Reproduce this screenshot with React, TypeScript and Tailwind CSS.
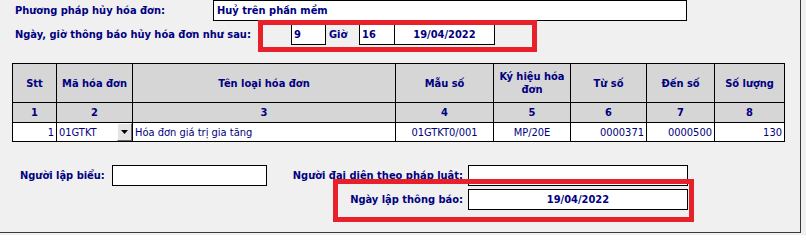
import React from "react";

const navy = "text-[#000080]";

const cols = [
  { head: "Stt", num: "1" },
  { head: "Mã hóa đơn", num: "2" },
  { head: "Tên loại hóa đơn", num: "3" },
  { head: "Mẫu số", num: "4" },
  { head: "Ký hiệu hóa đơn", num: "5" },
  { head: "Từ số", num: "6" },
  { head: "Đến số", num: "7" },
  { head: "Số lượng", num: "8" },
];

function Box({ className = "", children }: { className?: string; children?: React.ReactNode }) {
  return (
    <div className={`flex items-center border border-black bg-white ${className}`}>
      {children}
    </div>
  );
}

function DropButton() {
  return (
    <div className="flex h-full w-[15px] items-center justify-center border-t border-l border-t-white border-l-white border-r border-b border-r-[#6a6a6a] border-b-[#6a6a6a] bg-[#e4e4e4]">
      <svg width="7" height="4" viewBox="0 0 7 4">
        <polygon points="0,0 7,0 3.5,4" fill="#000" />
      </svg>
    </div>
  );
}

export default function App() {
  return (
    <div
      className="relative h-[235px] w-[806px] overflow-hidden bg-[#f0f0f0] text-[11px] leading-[13px]"
      style={{ fontFamily: '"DejaVu Sans Condensed", "DejaVu Sans", sans-serif' }}
    >
      <div className="h-[233px] w-[801px] border-r border-b border-[#3a3a3a]">
        {/* phương pháp */}
        <div className="flex h-[21px] items-center pl-[15px]">
          <div className={`w-[198px] font-bold ${navy}`}>Phương pháp hủy hóa đơn:</div>
          <Box className={`h-[21px] w-[474px] pl-[3px] font-bold ${navy}`}>Huỷ trên phần mềm</Box>
        </div>

        {/* ngày giờ */}
        <div className="mt-[3px] flex h-[21px] items-center pl-[15px]">
          <div className={`w-[276px] font-bold ${navy}`}>Ngày, giờ thông báo hủy hóa đơn như sau:</div>
          <Box className={`h-[21px] w-[35px] pl-[2px] font-bold ${navy}`}>9</Box>
          <div className={`w-[33px] pl-[3px] font-bold ${navy}`}>Giờ</div>
          <Box className={`h-[21px] w-[36px] pl-[2px] font-bold ${navy}`}>16</Box>
          <Box className={`-ml-px h-[21px] w-[101px] justify-center font-bold ${navy}`}>19/04/2022</Box>
        </div>

        {/* bảng */}
        <div className="ml-[12px] mt-[18px] grid w-[773px] grid-cols-[44px_76px_263px_98px_77px_76px_68px_70px] grid-rows-[39px_20px_19px] border-l border-t border-black">
          {cols.map((c) => (
            <div
              key={"h" + c.num}
              className={`flex items-center justify-center border-r border-b border-black bg-[#d6d6d6] px-1 text-center font-bold ${navy}`}
            >
              {c.head}
            </div>
          ))}
          {cols.map((c) => (
            <div
              key={"n" + c.num}
              className={`flex items-center justify-center border-r border-b border-black bg-[#d6d6d6] font-bold ${navy}`}
            >
              {c.num}
            </div>
          ))}
          <div className={`flex items-center justify-end border-r border-b border-black bg-white pr-[2px] ${navy}`}>1</div>
          <div className={`flex items-center border-r border-b border-black bg-white ${navy}`}>
            <span className="flex-1 pl-[2px]">01GTKT</span>
            <DropButton />
          </div>
          <div className={`flex items-center border-r border-b border-black bg-white pl-[2px] ${navy}`}>
            Hóa đơn giá trị gia tăng
          </div>
          <div className={`flex items-center justify-center border-r border-b border-black bg-white ${navy}`}>01GTKT0/001</div>
          <div className={`flex items-center justify-center border-r border-b border-black bg-white ${navy}`}>MP/20E</div>
          <div className={`flex items-center justify-end border-r border-b border-black bg-white pr-[2px] ${navy}`}>0000371</div>
          <div className={`flex items-center justify-end border-r border-b border-black bg-white pr-[2px] ${navy}`}>0000500</div>
          <div className={`flex items-center justify-end border-r border-b border-black bg-white pr-[2px] ${navy}`}>130</div>
        </div>

        {/* người lập / đại diện */}
        <div className="mt-[23px] flex h-[21px] items-center">
          <div className={`w-[112px] pl-[20px] font-bold ${navy}`}>Người lập biểu:</div>
          <Box className="h-[21px] w-[155px]" />
          <div className={`w-[201px] pr-[5px] text-right font-bold ${navy}`}>Người đại diện theo pháp luật:</div>
          <Box className="h-[21px] w-[220px]" />
        </div>

        <div className="mt-[3px] flex h-[21px] items-center">
          <div className={`w-[468px] pr-[5px] text-right font-bold ${navy}`}>Ngày lập thông báo:</div>
          <Box className={`h-[21px] w-[220px] justify-center font-bold ${navy}`}>19/04/2022</Box>
        </div>
      </div>

      {/* red highlight frames */}
      <div className="pointer-events-none absolute left-[258px] top-[20px] h-[32px] w-[279px] border-[5px] border-[#e8202a]" />
      <div className="pointer-events-none absolute left-[333px] top-[179px] h-[43px] w-[361px] border-[5px] border-[#e8202a]" />
    </div>
  );
}
